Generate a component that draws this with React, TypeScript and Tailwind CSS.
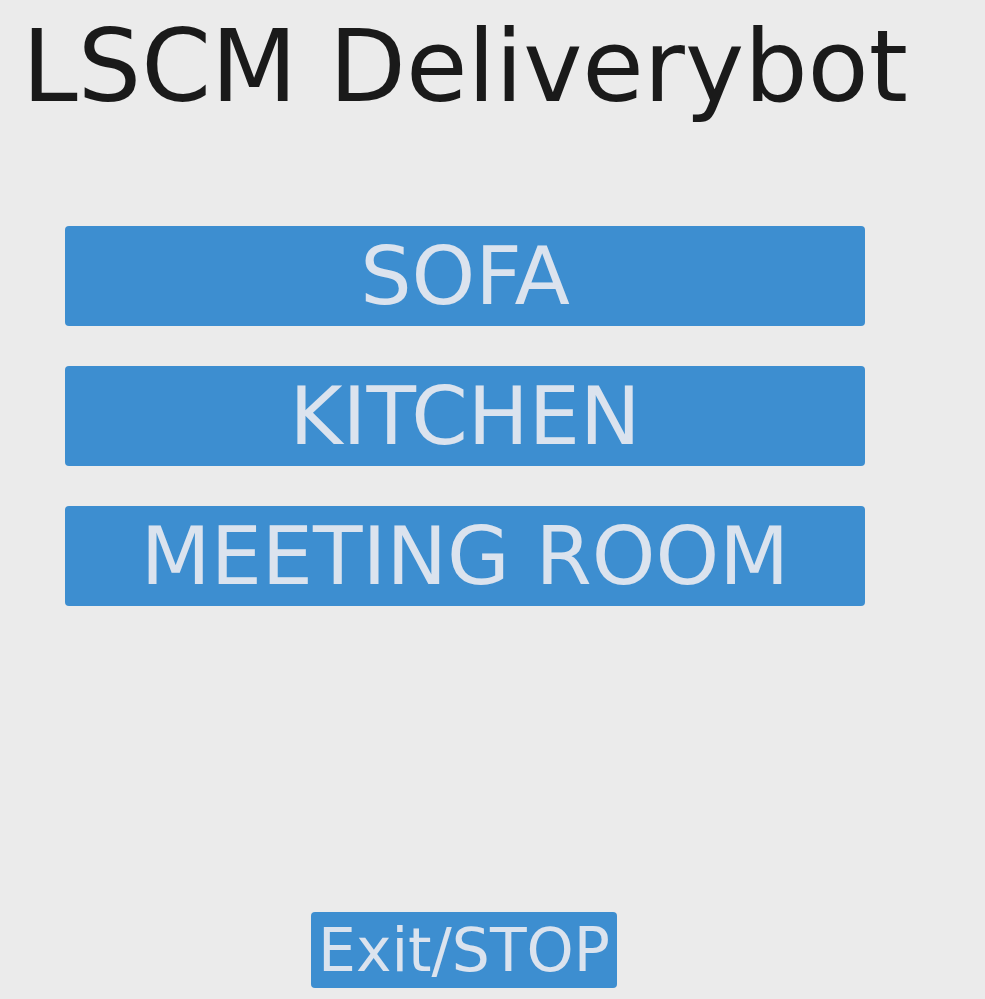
import React from "react";

const font = { fontFamily: '"DejaVu Sans", Verdana, sans-serif' };

export default function App() {
  const places = ["SOFA", "KITCHEN", "MEETING ROOM"];
  return (
    <div className="min-h-[999px] w-full bg-[#ebebeb]" style={font}>
      <div className="w-[930px] flex flex-col items-center">
        <h1 className="mt-[17px] text-[100px] leading-[100px] text-[#1a1a1a] font-normal whitespace-nowrap">
          LSCM Deliverybot
        </h1>
        <div className="mt-[109px] flex flex-col gap-[40px]">
          {places.map((p) => (
            <button
              key={p}
              className="w-[800px] h-[100px] rounded-[4px] bg-[#3d8ed0] text-[#dbe3ee] text-[81px] leading-[100px] whitespace-nowrap"
            >
              {p}
            </button>
          ))}
        </div>
        <button className="mt-[306px] -translate-x-[1px] h-[76px] px-[7px] rounded-[4px] bg-[#3d8ed0] text-[#dbe3ee] text-[60px] leading-[76px] whitespace-nowrap">
          Exit/STOP
        </button>
      </div>
    </div>
  );
}
